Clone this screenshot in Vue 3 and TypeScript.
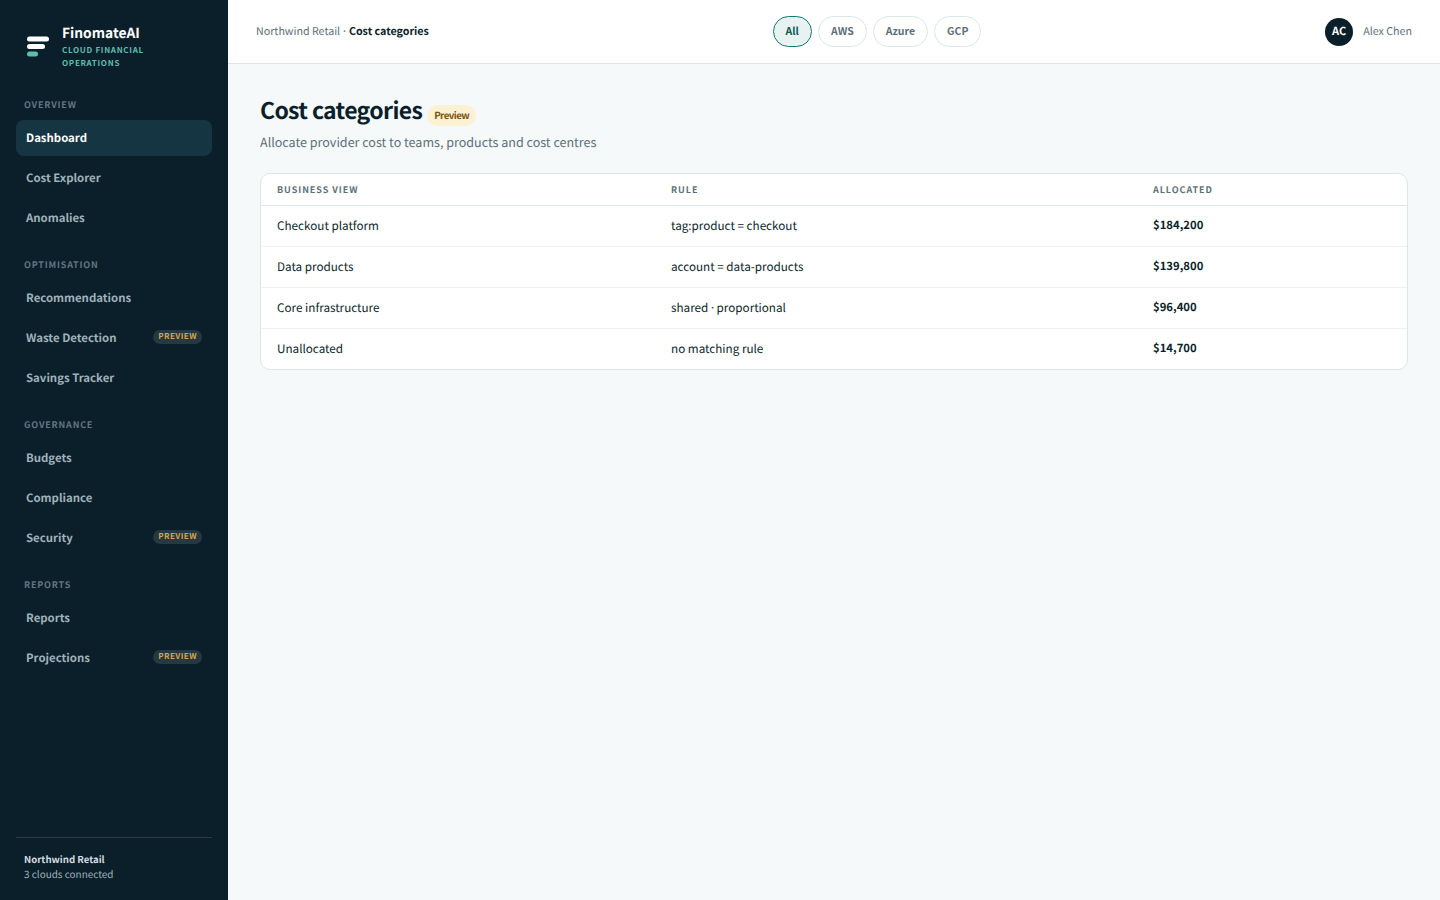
<template>
  <div class="shell">
    <aside class="sidebar">
      <div class="brand">
        <svg class="logo" width="24" height="22" viewBox="0 0 24 22">
          <rect x="2" y="0.5" width="22" height="5" rx="2.5" fill="#ffffff" />
          <rect x="2" y="8" width="18" height="5" rx="2.5" fill="#ffffff" />
          <rect x="2" y="15.5" width="11" height="5" rx="2.5" fill="#5fbdae" />
        </svg>
        <div class="brand-text">
          <div class="brand-name">FinomateAI</div>
          <div class="brand-sub">CLOUD FINANCIAL OPERATIONS</div>
        </div>
      </div>

      <nav class="nav">
        <section v-for="group in navGroups" :key="group.label" class="nav-group">
          <div class="nav-label">{{ group.label }}</div>
          <a
            v-for="item in group.items"
            :key="item.name"
            class="nav-item"
            :class="{ active: item.name === 'Dashboard' }"
          >
            <span>{{ item.name }}</span>
            <span v-if="item.preview" class="nav-badge">PREVIEW</span>
          </a>
        </section>
      </nav>

      <div class="org">
        <div class="org-name">Northwind Retail</div>
        <div class="org-meta">3 clouds connected</div>
      </div>
    </aside>

    <div class="content">
      <header class="topbar">
        <div class="crumbs">Northwind Retail<span class="sep"> · </span><strong>Cost categories</strong></div>
        <div class="filters">
          <button
            v-for="cloud in clouds"
            :key="cloud"
            class="chip"
            :class="{ selected: cloud === selected }"
            @click="selected = cloud"
          >
            {{ cloud }}
          </button>
        </div>
        <div class="user">
          <span class="avatar">AC</span>
          <span class="user-name">Alex Chen</span>
        </div>
      </header>

      <main class="page">
        <div class="title-row">
          <h1>Cost categories</h1>
          <span class="title-badge">Preview</span>
        </div>
        <p class="subtitle">Allocate provider cost to teams, products and cost centres</p>

        <div class="table-card">
          <table>
            <colgroup>
              <col class="col-view" />
              <col class="col-rule" />
              <col />
            </colgroup>
            <thead>
              <tr>
                <th>BUSINESS VIEW</th>
                <th>RULE</th>
                <th>ALLOCATED</th>
              </tr>
            </thead>
            <tbody>
              <tr v-for="row in rows" :key="row.view">
                <td>{{ row.view }}</td>
                <td :class="{ tight: row.rule.includes('·') }">{{ row.rule }}</td>
                <td class="amount">{{ row.allocated }}</td>
              </tr>
            </tbody>
          </table>
        </div>
      </main>
    </div>
  </div>
</template>

<script setup lang="ts">
import { ref } from 'vue'

const navGroups = [
  {
    label: 'OVERVIEW',
    items: [{ name: 'Dashboard' }, { name: 'Cost Explorer' }, { name: 'Anomalies' }],
  },
  {
    label: 'OPTIMISATION',
    items: [
      { name: 'Recommendations' },
      { name: 'Waste Detection', preview: true },
      { name: 'Savings Tracker' },
    ],
  },
  {
    label: 'GOVERNANCE',
    items: [{ name: 'Budgets' }, { name: 'Compliance' }, { name: 'Security', preview: true }],
  },
  {
    label: 'REPORTS',
    items: [{ name: 'Reports' }, { name: 'Projections', preview: true }],
  },
]

const clouds = ['All', 'AWS', 'Azure', 'GCP']
const selected = ref('All')

const rows = [
  { view: 'Checkout platform', rule: 'tag:product = checkout', allocated: '$184,200' },
  { view: 'Data products', rule: 'account = data-products', allocated: '$139,800' },
  { view: 'Core infrastructure', rule: 'shared · proportional', allocated: '$96,400' },
  { view: 'Unallocated', rule: 'no matching rule', allocated: '$14,700' },
]
</script>

<style>
html,
body {
  margin: 0;
  background: #f5f9fa;
}
</style>

<style scoped>
.shell {
  display: flex;
  height: 900px;
  font-family: 'Noto Sans CJK JP', 'Noto Sans', sans-serif;
  text-rendering: geometricPrecision;
  color: #0b1f2a;
  overflow: hidden;
}

.sidebar {
  box-sizing: border-box;
  width: 228px;
  flex: none;
  display: flex;
  flex-direction: column;
  padding: 24px 16px 8px;
  background: #0b1f2a;
}

.brand {
  display: flex;
  align-items: center;
  gap: 13px;
  padding: 0 0 1px 9px;
  height: 44px;
}

.logo {
  flex: none;
  margin-top: 2px;
}

.brand-name {
  font-size: 13.8px;
  line-height: 18px;
  font-weight: 700;
  color: #ffffff;
}

.brand-sub {
  width: 100px;
  margin-top: 3px;
  font-size: 8px;
  line-height: 13px;
  font-weight: 700;
  letter-spacing: 0.7px;
  color: #5fbdae;
}

.nav {
  flex: 1;
  padding-top: 26px;
}

.nav-group {
  margin-bottom: 19px;
}

.nav-label {
  height: 20px;
  padding-left: 8px;
  margin-bottom: 5px;
  font-size: 9px;
  line-height: 20px;
  font-weight: 700;
  letter-spacing: 0.8px;
  color: #62767f;
}

.nav-item {
  box-sizing: border-box;
  display: flex;
  align-items: center;
  justify-content: space-between;
  height: 36px;
  margin-bottom: 4px;
  padding: 0 10px 1px;
  border-radius: 8px;
  font-size: 11.4px;
  font-weight: 600;
  color: #9fb2bb;
}

.nav-item.active {
  background: #153543;
  color: #ffffff;
}

.nav-badge {
  height: 14px;
  margin-bottom: 2px;
  padding: 0 5px;
  border-radius: 7px;
  background: #263842;
  font-size: 8px;
  line-height: 14px;
  font-weight: 700;
  letter-spacing: 0.45px;
  color: #d4a64f;
}

.org {
  padding: 14px 8px 11px;
  border-top: 1px solid #2a3d47;
}

.org-name {
  font-size: 9.6px;
  line-height: 15px;
  font-weight: 700;
  color: #d3dde1;
}

.org-meta {
  margin-top: -1px;
  font-size: 9.95px;
  line-height: 15px;
  color: #9fb2bb;
}

.content {
  flex: 1;
  min-width: 0;
  display: flex;
  flex-direction: column;
}

.topbar {
  box-sizing: border-box;
  display: flex;
  align-items: center;
  justify-content: space-between;
  height: 64px;
  padding: 0 28px;
  background: #ffffff;
  border-bottom: 1px solid #dde6e8;
}

.crumbs {
  font-size: 10.7px;
  color: #5d6f79;
}

.crumbs .sep {
  word-spacing: -1px;
}

.crumbs strong {
  font-weight: 700;
  color: #0b1f2a;
}

.filters {
  display: flex;
  gap: 6px;
}

.chip {
  box-sizing: border-box;
  height: 31px;
  padding: 0 12px 2px;
  border: 1px solid #dde6e8;
  border-radius: 16px;
  background: #ffffff;
  font-family: inherit;
  font-size: 10.5px;
  font-weight: 600;
  color: #5d6f79;
}

.chip.selected {
  border-color: #0f7a70;
  background: #e8f3f1;
  color: #0e5a54;
}

.user {
  display: flex;
  align-items: center;
  gap: 10px;
}

.avatar {
  box-sizing: border-box;
  display: flex;
  align-items: center;
  justify-content: center;
  width: 28px;
  height: 28px;
  padding-bottom: 2px;
  border-radius: 50%;
  background: #0b1f2a;
  font-size: 11px;
  font-weight: 700;
  color: #ffffff;
}

.user-name {
  font-size: 10.7px;
  color: #5d6f79;
}

.page {
  flex: 1;
  padding: 30px 32px 32px;
  background: #f5f9fa;
}

.title-row {
  display: flex;
  align-items: center;
  gap: 5px;
  height: 30px;
}

h1 {
  margin: 0;
  font-size: 23px;
  line-height: 30px;
  font-weight: 700;
  letter-spacing: -0.65px;
  color: #0b1f2a;
}

.title-badge {
  margin-top: 12px;
  height: 21px;
  padding: 0 7px;
  border-radius: 11px;
  background: #fdf1d3;
  font-size: 9.8px;
  line-height: 21px;
  font-weight: 700;
  letter-spacing: -0.6px;
  color: #7a5410;
}

.subtitle {
  margin: 8px 0 21px;
  font-size: 12.55px;
  line-height: 20px;
  color: #5d6f79;
}

.table-card {
  border: 1px solid #dde6e8;
  border-radius: 10px;
  background: #ffffff;
  overflow: hidden;
}

table {
  width: 100%;
  border-collapse: collapse;
  table-layout: fixed;
}

.col-view {
  width: 394px;
}

.col-rule {
  width: 482px;
}

th {
  height: 31px;
  padding: 0 16px;
  border-bottom: 1px solid #dde6e8;
  text-align: left;
  font-size: 9px;
  font-weight: 700;
  letter-spacing: 0.95px;
  color: #5d6f79;
}

td {
  height: 38px;
  padding: 0 16px 2px;
  border-bottom: 1px solid #edf2f3;
  font-size: 11.7px;
  color: #0b1f2a;
}

td.tight {
  word-spacing: -1.75px;
}

tbody tr:last-child td {
  border-bottom: none;
}

.amount {
  font-size: 11.3px;
  font-weight: 600;
}
</style>
